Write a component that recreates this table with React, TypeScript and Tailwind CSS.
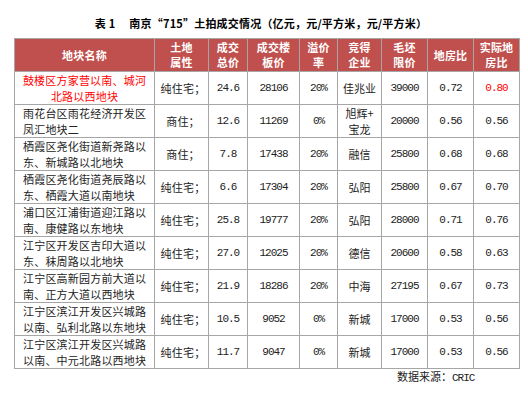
import React from "react";

type Row = {
  name: string[];
  kind: string;
  total: string;
  price: string;
  premium: string;
  winner: string[];
  limit: string;
  ratio: string;
  actual: string;
  red?: boolean;
};

const rows: Row[] = [
  { name: ["鼓楼区方家营以南、城河", "北路以西地块"], kind: "纯住宅；", total: "24.6", price: "28106", premium: "20%", winner: ["佳兆业"], limit: "39000", ratio: "0.72", actual: "0.80", red: true },
  { name: ["雨花台区雨花经济开发区", "凤汇地块二"], kind: "商住；", total: "12.6", price: "11269", premium: "0%", winner: ["旭辉+", "宝龙"], limit: "20000", ratio: "0.56", actual: "0.56" },
  { name: ["栖霞区尧化街道新尧路以", "东、新城路以北地块"], kind: "商住；", total: "7.8", price: "17438", premium: "20%", winner: ["融信"], limit: "25800", ratio: "0.68", actual: "0.68" },
  { name: ["栖霞区尧化街道尧辰路以", "东、栖霞大道以南地块"], kind: "纯住宅；", total: "6.6", price: "17304", premium: "20%", winner: ["弘阳"], limit: "25800", ratio: "0.67", actual: "0.70" },
  { name: ["浦口区江浦街道迎江路以", "南、康健路以东地块"], kind: "纯住宅；", total: "25.8", price: "19777", premium: "20%", winner: ["弘阳"], limit: "28000", ratio: "0.71", actual: "0.76" },
  { name: ["江宁区开发区吉印大道以", "东、秣周路以北地块"], kind: "纯住宅；", total: "27.0", price: "12025", premium: "20%", winner: ["德信"], limit: "20600", ratio: "0.58", actual: "0.63" },
  { name: ["江宁区高新园方前大道以", "南、正方大道以西地块"], kind: "纯住宅；", total: "21.9", price: "18286", premium: "20%", winner: ["中海"], limit: "27195", ratio: "0.67", actual: "0.73" },
  { name: ["江宁区滨江开发区兴城路", "以南、弘利北路以东地块"], kind: "纯住宅；", total: "10.5", price: "9052", premium: "0%", winner: ["新城"], limit: "17000", ratio: "0.53", actual: "0.56" },
  { name: ["江宁区滨江开发区兴城路", "以南、中元北路以西地块"], kind: "纯住宅；", total: "11.7", price: "9047", premium: "0%", winner: ["新城"], limit: "17000", ratio: "0.53", actual: "0.56" },
];

const headers: string[][] = [
  ["地块名称"],
  ["土地", "属性"],
  ["成交", "总价"],
  ["成交楼", "板价"],
  ["溢价", "率"],
  ["竞得", "企业"],
  ["毛坯", "限价"],
  ["地房比"],
  ["实际地", "房比"],
];

const widths = ["w-[140px]", "w-[54px]", "w-[39px]", "w-[52px]", "w-[38px]", "w-[44px]", "w-[46px]", "w-[46px]", "w-[46px]"];

const cjk = "font-['Noto_Sans_CJK_SC',sans-serif]";
const mono = "font-['Liberation_Mono','Noto_Sans_CJK_SC',monospace] tracking-[-1px]";
const cell = "border border-[#a6a6a6] p-0 h-[33px] align-middle text-center";

const Lines = ({ lines }: { lines: string[] }) => (
  <>
    {lines.map((l, i) => (
      <div key={i}>{l}</div>
    ))}
  </>
);

export default function App() {
  return (
    <div className={`w-[528px] h-[401px] bg-white ${cjk} text-[11px] text-[#222]`}>
      <div className="h-[38px] flex items-end justify-center pb-[8px] pr-[6px]">
        <div className="font-bold leading-[14px] tracking-[0.2px] text-black">
          表 1　 南京“715”土拍成交情况（亿元，元/平方米，元/平方米）
        </div>
      </div>
      <table className="ml-[14px] w-[505px] table-fixed border-collapse">
        <colgroup>
          {widths.map((w, i) => (
            <col key={i} className={w} />
          ))}
        </colgroup>
        <thead>
          <tr>
            {headers.map((h, i) => (
              <th key={i} className={`${cell} bg-[#c0504d] text-white font-bold leading-[15px] tracking-[0.2px]`}>
                <Lines lines={h} />
              </th>
            ))}
          </tr>
        </thead>
        <tbody>
          {rows.map((r, i) => (
            <tr key={i}>
              <td
                className={`${cell} leading-[16px] tracking-[0.2px] ${
                  r.red ? "text-[#ff0000] text-center" : "text-left pl-[8px]"
                }`}
              >
                <Lines lines={r.name} />
              </td>
              <td className={`${cell} tracking-[0.2px] pl-[3px]`}>{r.kind}</td>
              <td className={`${cell} ${mono}`}>{r.total}</td>
              <td className={`${cell} ${mono}`}>{r.price}</td>
              <td className={`${cell} ${mono}`}>{r.premium}</td>
              <td className={`${cell} leading-[16px]`}>
                <Lines lines={r.winner} />
              </td>
              <td className={`${cell} ${mono}`}>{r.limit}</td>
              <td className={`${cell} ${mono}`}>{r.ratio}</td>
              <td className={`${cell} ${mono} ${r.red ? "text-[#ff0000]" : ""}`}>{r.actual}</td>
            </tr>
          ))}
        </tbody>
      </table>
      <div className="pl-[397px] leading-[14px] text-[11px]">
        数据来源：<span className={mono}>CRIC</span>
      </div>
    </div>
  );
}
